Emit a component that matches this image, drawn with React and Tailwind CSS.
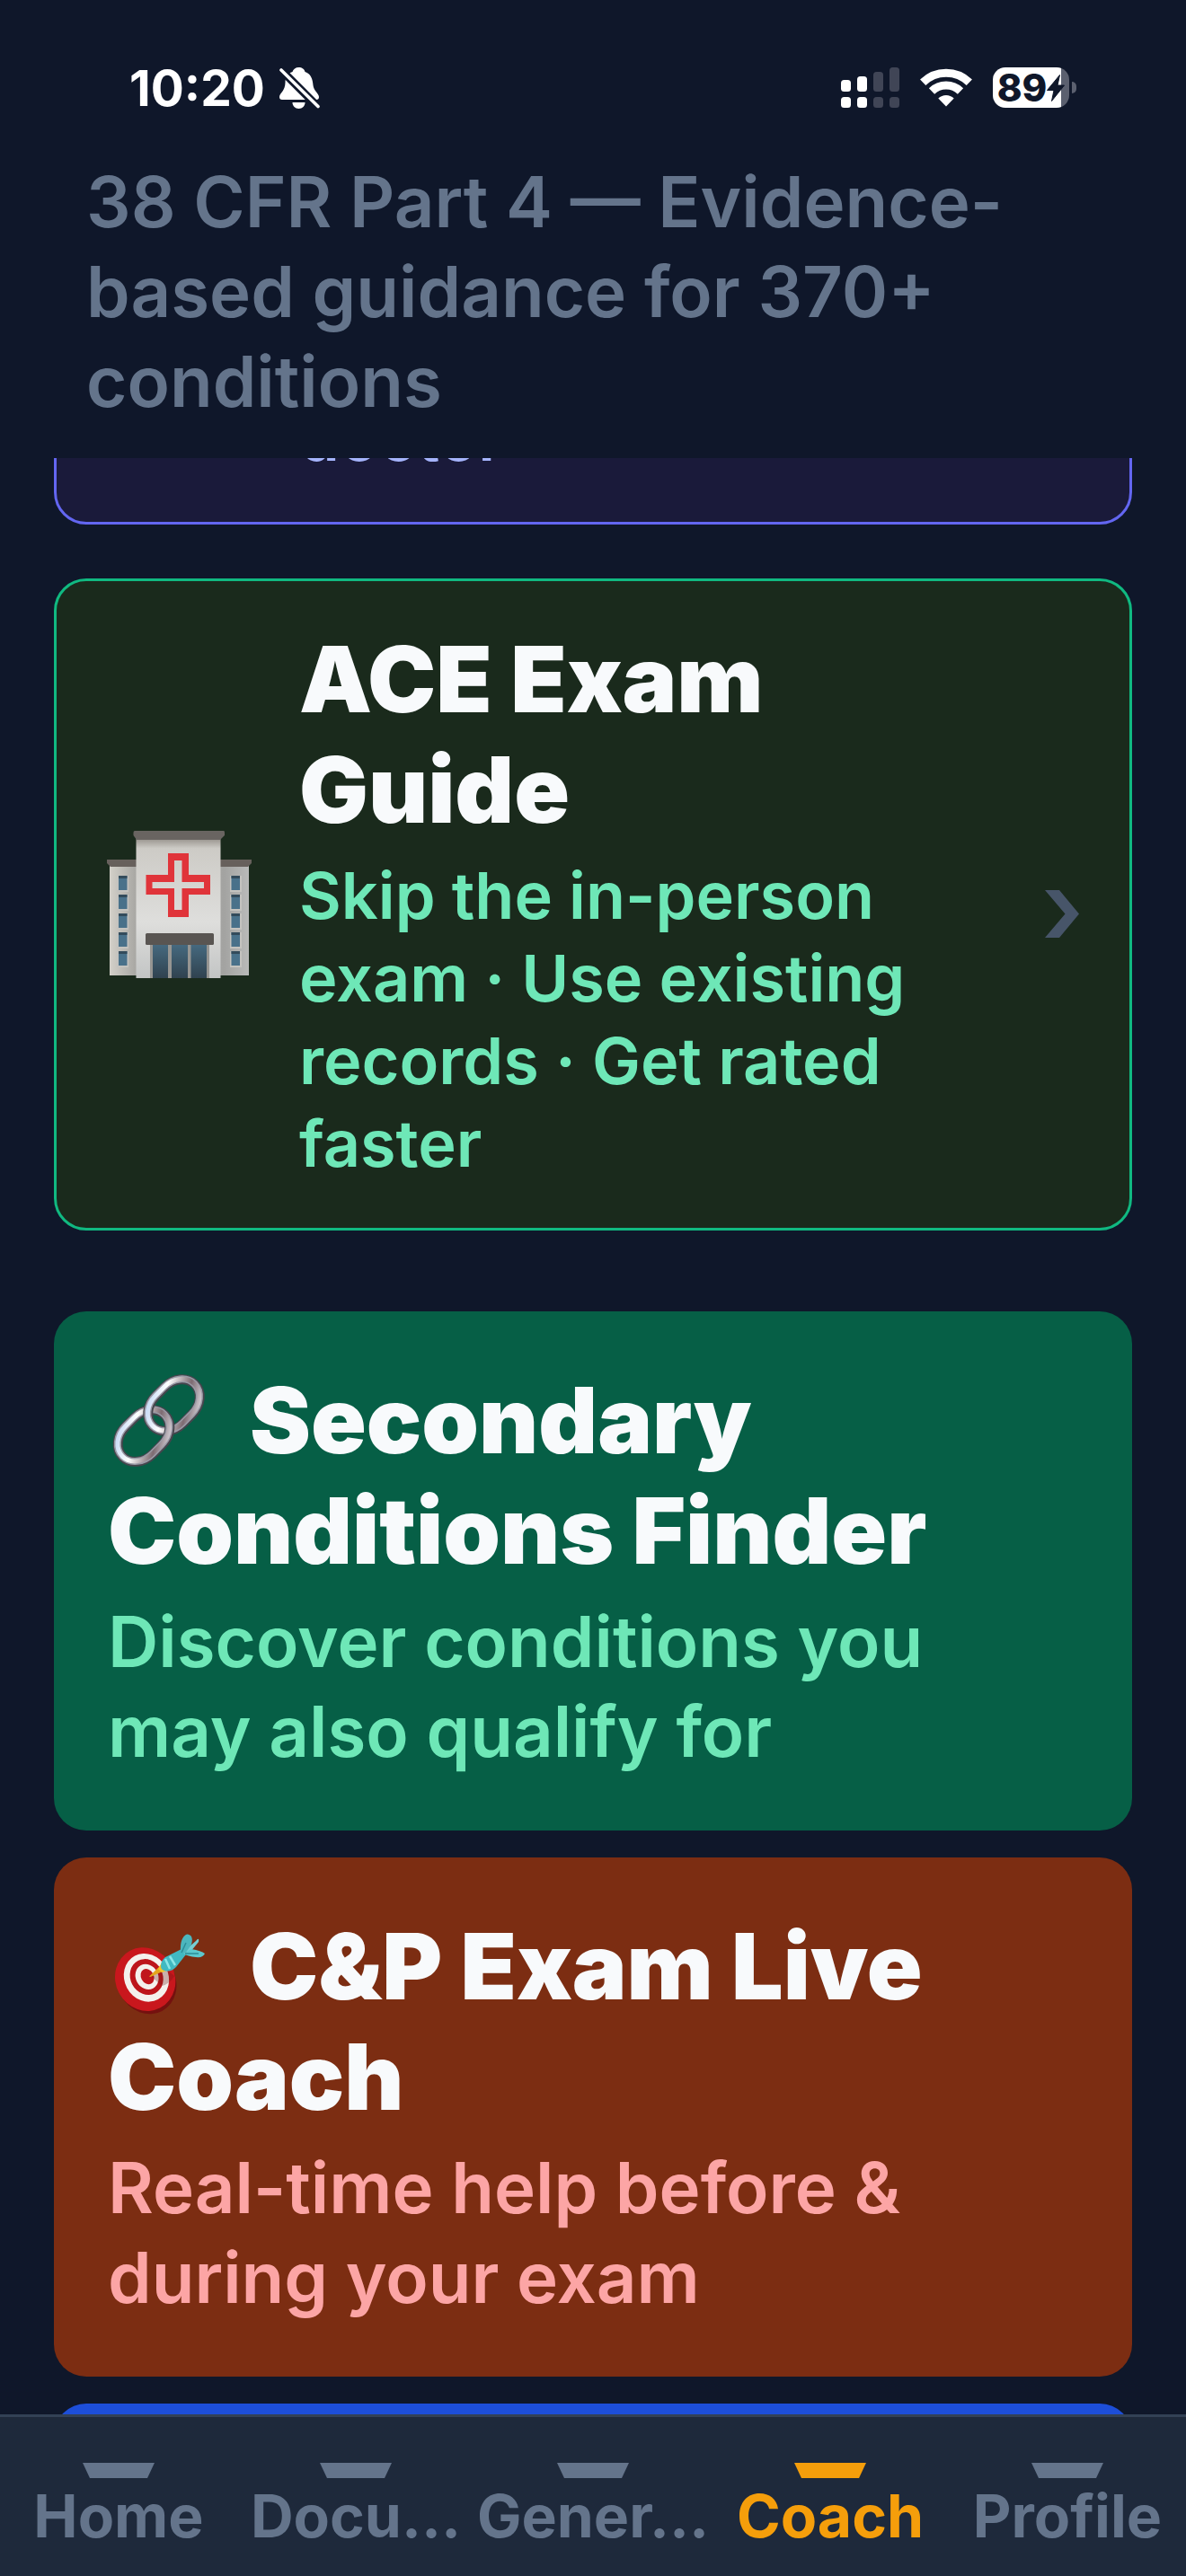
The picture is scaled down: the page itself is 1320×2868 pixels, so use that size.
import clsx from 'clsx'

const tabs = [
  { id: 'home', label: 'Home' },
  { id: 'documents', label: 'Docu…' },
  { id: 'generate', label: 'Gener…' },
  { id: 'coach', label: 'Coach' },
  { id: 'profile', label: 'Profile' },
]

const tools = [
  {
    id: 'secondary',
    icon: LinkIcon,
    title: 'Secondary Conditions Finder',
    text: 'Discover conditions you may also qualify for',
    card: 'bg-[#065f46]',
    tone: 'text-[#6ee7b7]',
  },
  {
    id: 'exam-coach',
    icon: TargetIcon,
    title: 'C&P Exam Live Coach',
    text: 'Real-time help before & during your exam',
    card: 'bg-[#7c2d12]',
    tone: 'text-[#fca5a5]',
  },
]

function BellOffIcon() {
  return (
    <svg viewBox="0 0 45 46" className="h-[46px] w-[45px]" aria-hidden="true">
      <path
        fill="#fff"
        d="M21.500 0C25 0 28 2 28.500 5C35 7 37 13 37.500 20C38 26 44 29 44 33Q44 36 41 36H3Q0 36 0 33C0 29 6.500 26 6.500 17C6.500 11 9 6.500 14.500 5C15.300 2 18 0 21.500 0Z"
      />
      <path fill="#fff" d="M14.500 39H28.500C28.500 43 25.500 46 21.500 46S14.500 43 14.500 39Z" />
      <path d="M-1 0L45 46" stroke="#0f172a" strokeWidth="9" />
      <path d="M2 3L43 43.500" stroke="#fff" strokeWidth="3.600" strokeLinecap="round" />
    </svg>
  )
}

function SignalIcon() {
  return (
    <svg viewBox="0 0 65 45" className="h-[45px] w-[65px]" aria-hidden="true">
      <g fill="#fff">
        <rect x="0" y="14" width="11" height="13" rx="3.500" />
        <rect x="18" y="10" width="11" height="17" rx="3.500" />
        <rect x="0" y="33" width="11" height="12" rx="3.500" />
        <rect x="18" y="33" width="11" height="12" rx="3.500" />
      </g>
      <g fill="#404556">
        <rect x="36" y="5" width="11" height="22" rx="3.500" />
        <rect x="54" y="0" width="11" height="27" rx="3.500" />
        <rect x="36" y="33" width="11" height="12" rx="3.500" />
        <rect x="54" y="33" width="11" height="12" rx="3.500" />
      </g>
    </svg>
  )
}

function WifiIcon() {
  return (
    <svg viewBox="0 0 58 43" className="h-[43px] w-[58px]" aria-hidden="true">
      <g fill="none" stroke="#fff" strokeWidth="9">
        <path d="M3.200 15.800A37 37 0 0 1 54.800 15.800" />
        <path d="M13 25.500A23 23 0 0 1 45 25.500" />
      </g>
      <path fill="#fff" d="M29 42.500L20.300 33.600A12.500 12.500 0 0 1 37.700 33.600Z" />
    </svg>
  )
}

function Battery() {
  return (
    <div className="flex items-center gap-[3px]">
      <div className="flex h-[45px] w-[85px] items-center justify-center rounded-[14px] bg-[linear-gradient(to_right,#fff_76px,#5b606f_76px)] text-[#0f172a]">
        <span className="text-[42px] leading-none font-extrabold">89</span>
        <svg viewBox="0 0 20 30" className="h-[30px] w-5" aria-hidden="true">
          <path fill="currentColor" d="M14.500 .5L.5 17.500H8L5.500 29.500L19.500 12H12Z" stroke="currentColor" strokeLinejoin="round" />
        </svg>
      </div>
      <div className="h-[13px] w-[5px] rounded-r-full bg-[#5b606f]" />
    </div>
  )
}

function HospitalIcon() {
  const windows = [51, 72, 93, 114, 135]
  return (
    <svg viewBox="0 0 162 166" className="h-[166px] w-[162px] shrink-0" aria-hidden="true">
      <defs>
        <linearGradient id="wing" x1="0" x2="1" y1="0" y2="0">
          <stop offset="0" stopColor="#d3d0c9" />
          <stop offset=".18" stopColor="#aaa9a5" />
          <stop offset=".82" stopColor="#a3a3a1" />
          <stop offset="1" stopColor="#b9bab9" />
        </linearGradient>
        <linearGradient id="tower" x1="0" x2="0" y1="0" y2="1">
          <stop offset="0" stopColor="#8f8a84" />
          <stop offset=".08" stopColor="#cdcbc6" />
          <stop offset=".6" stopColor="#dededc" />
          <stop offset="1" stopColor="#c3c5c5" />
        </linearGradient>
        <linearGradient id="glass" x1="0" x2="0" y1="0" y2="1">
          <stop offset="0" stopColor="#466a80" />
          <stop offset="1" stopColor="#30424f" />
        </linearGradient>
      </defs>
      <path fill="url(#wing)" d="M3 36H158V162H3Z" />
      <path fill="#67605c" d="M0 33H161V37L157 41H4L0 37Z" />
      {windows.map((y) => (
        <g key={y}>
          <path fill="#c4c3bf" d={`M11 ${y}H24V${y + 18}H11ZM137 ${y}H150V${y + 18}H137Z`} />
          <path fill="#49718a" d={`M13 ${y}H22.500V${y + 16}H13ZM138.500 ${y}H148V${y + 16}H138.500Z`} />
          <path fill="#334b5b" d={`M13 ${y}H22.500V${y + 3}H13ZM138.500 ${y}H148V${y + 3}H138.500Z`} />
        </g>
      ))}
      <path fill="url(#tower)" d="M32.500 8H126.500V165H32.500Z" />
      <path fill="#696461" d="M31 1H130Q131 1 131 3V6L126 11H33L29.500 6V3Q29.500 1 31 1Z" />
      <path
        fill="#e0343a"
        fillRule="evenodd"
        d="M68 26H91V50H115V72H91V97H68V72H43.500V50H68ZM75 34V58H50.500V65H75V89H83.500V65H108V58H83.500V34Z"
      />
      <path fill="#969592" d="M48 127H114V165H48Z" />
      <path fill="url(#glass)" d="M51 127H68V165H51ZM72 127H90V165H72ZM93.500 127H111V165H93.500Z" />
      <rect x="43" y="115" width="76" height="13" rx="1.500" fill="#595552" />
    </svg>
  )
}

// One chain ring: dark rim, steel body, then the bright streak on top.
function Ring({ x, y }) {
  return (
    <g transform={`translate(${x} ${y}) rotate(-45)`} fill="none">
      <rect x="-33" y="-21.500" width="66" height="43" rx="26" ry="21.500" stroke="#45454d" strokeWidth="11" />
      <rect x="-33" y="-22" width="66" height="43" rx="26" ry="21.500" stroke="#9a9aa6" strokeWidth="8" />
      <rect x="-33" y="-22" width="66" height="43" rx="26" ry="21.500" stroke="url(#steel)" strokeWidth="5" />
    </g>
  )
}

function LinkIcon() {
  return (
    <svg viewBox="0 0 114 114" className="mr-11 inline-block h-[114px] w-[114px] align-[-20px]" aria-hidden="true">
      <defs>
        <linearGradient id="steel" x1="0" x2="1" y1="0" y2="1">
          <stop offset="0" stopColor="#b4cdf2" />
          <stop offset=".35" stopColor="#fff" />
          <stop offset=".7" stopColor="#7d6b72" />
          <stop offset="1" stopColor="#f4f4fb" />
        </linearGradient>
        <clipPath id="crossing">
          <path d="M55 58H80V85H55Z" />
        </clipPath>
      </defs>
      <Ring x={40} y={74.500} />
      <Ring x={73.500} y={40.500} />
      <g clipPath="url(#crossing)">
        <Ring x={40} y={74.500} />
      </g>
    </svg>
  )
}

function TargetIcon() {
  return (
    <svg viewBox="0 0 114 114" className="mr-11 inline-block h-[114px] w-[114px] align-[-20px]" aria-hidden="true">
      <g transform="rotate(-28 43 72)">
        <ellipse cx="42" cy="75" rx="32" ry="36" fill="#74110f" />
        <ellipse cx="42" cy="71" rx="33" ry="36" fill="#c9171d" />
        <ellipse cx="44" cy="70" rx="24.500" ry="27.500" fill="#f4f1ed" />
        <ellipse cx="44.500" cy="69.500" rx="18" ry="20.500" fill="#bd151b" />
        <ellipse cx="45" cy="69.500" rx="12.500" ry="14.500" fill="#f4f1ed" />
        <ellipse cx="45.500" cy="69.500" rx="7" ry="9" fill="#c0161c" />
      </g>
      <path d="M48 68L60 79Q69 77 74 68L66 61Z" fill="#6a1714" opacity=".3" />
      <path d="M46 68.500L59 56L63 62L47.500 69Z" fill="#e5a51b" />
      <path d="M56 60L60 53L66 62L60 64Z" fill="#f4c32b" />
      <path d="M59 57Q59 51 64 47L82 38L87 44L76 58Q70 64 63 62Q59 61 59 57Z" fill="#41b9c2" />
      <path d="M64 49L69 60M69 46L75 56" stroke="#8be6e8" strokeWidth="2.500" />
      <path d="M84 41L98 29Q102 24 101 30L92 41Z" fill="#75cdd2" />
      <path d="M81 41Q80 25 88 21.500Q96 22 93 33L86 43Z" fill="#4cb6bd" />
      <path d="M84 43L93 38Q104 40 108 43Q106 48 98 47Q89 46 84 43Z" fill="#5cc8ce" />
      <path d="M82 42L87 31M86 43L101 43" stroke="#2b8d98" strokeWidth="1.500" />
    </svg>
  )
}

function StatusBar() {
  return (
    <div className="flex h-[175px] items-center justify-between pt-5 pr-[122px] pl-36">
      <div className="flex items-center gap-4">
        <span className="text-[55px] leading-[64px] font-bold text-white">10:20</span>
        <BellOffIcon />
      </div>
      <div className="flex items-center gap-[23px]">
        <SignalIcon />
        <WifiIcon />
        <Battery />
      </div>
    </div>
  )
}

function ToolCard({ tool }) {
  const Icon = tool.icon
  return (
    <button type="button" className={clsx('block w-full rounded-[36px] p-[60px] text-left', tool.card)}>
      <h2 className="text-[102px] leading-[123px] font-black text-slate-50">
        <Icon />
        {tool.title}
      </h2>
      <p className={clsx('mt-3 text-[78px] leading-[100px] font-semibold', tool.tone)}>{tool.text}</p>
    </button>
  )
}

function TabBar({ active }) {
  return (
    <nav className="grid shrink-0 grid-cols-5 border-t-[3px] border-[#334155] bg-[#1e293b] pt-[51px] pb-[27px]">
      {tabs.map((tab) => (
        <a
          key={tab.id}
          href={`#${tab.id}`}
          aria-current={tab.id === active ? 'page' : undefined}
          className={clsx(
            'flex flex-col items-center gap-0.5 text-[66px] leading-[80px] font-bold whitespace-nowrap',
            tab.id === active ? 'text-[#f59e0b]' : 'text-[#64748b]',
          )}
        >
          <svg viewBox="0 0 80 17" className="h-[17px] w-20" aria-hidden="true">
            <path fill="currentColor" d="M0 0H80L72 17H8Z" />
          </svg>
          {tab.label}
        </a>
      ))}
    </nav>
  )
}

export default function App() {
  return (
    <div className="flex h-screen flex-col overflow-hidden bg-[#0f172a] font-['Inter',sans-serif]">
      <header className="shrink-0 pb-[35px]">
        <StatusBar />
        <p className="px-24 text-[78px] leading-[100px] font-semibold text-[#64748b]">
          38 CFR Part 4 — Evidence-based guidance for 370+ conditions
        </p>
      </header>

      <main className="flex min-h-0 flex-1 flex-col overflow-hidden px-[60px]">
        {/* tail end of the card scrolled under the header */}
        <div className="flex h-[74px] shrink-0 items-end overflow-hidden">
          <div className="w-full rounded-[36px] border-[3px] border-[#6366f1] bg-[#1a1a3a] py-12 pr-[57px] pl-[270px]">
            <p className="text-[72px] leading-[92px] font-semibold text-[#a5b4fc]">doctor</p>
          </div>
        </div>

        <button
          type="button"
          className="mt-[60px] flex w-full shrink-0 items-center rounded-[36px] border-[3px] border-[#10b981] bg-[#1a2a1c] px-14 py-12 text-left"
        >
          <HospitalIcon />
          <div className="ml-[52px] flex-1 pr-24">
            <h2 className="text-[102px] leading-[123px] font-black text-slate-50">ACE Exam Guide</h2>
            <p className="mt-2.5 text-[72px] leading-[92px] font-semibold text-[#6ee7b7]">
              Skip the in-person exam · Use existing records · Get rated faster
            </p>
          </div>
          <svg viewBox="0 0 38 53" className="mt-5 h-[53px] w-[38px] shrink-0" aria-hidden="true">
            <path fill="#475569" d="M0 0H16L38 26.500L16 53H0L22.500 26.500Z" />
          </svg>
        </button>

        <div className="mt-[90px] flex shrink-0 flex-col gap-[30px]">
          {tools.map((tool) => (
            <ToolCard key={tool.id} tool={tool} />
          ))}
          <div className="h-[578px] rounded-[36px] bg-[#1d4ed8]" />
        </div>
      </main>

      <TabBar active="coach" />
    </div>
  )
}
